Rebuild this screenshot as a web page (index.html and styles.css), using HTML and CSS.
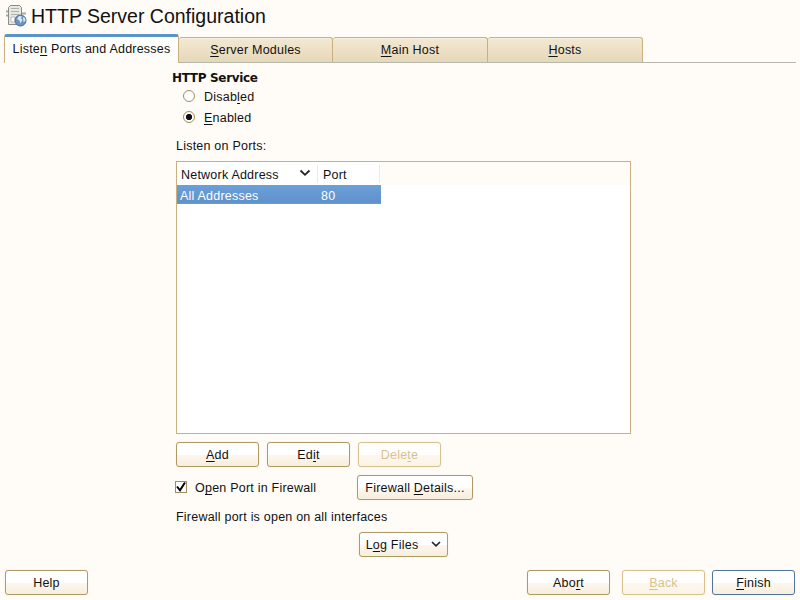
FILE: index.html
```html
<!DOCTYPE html>
<html lang="en">
<head>
<meta charset="utf-8">
<title>HTTP Server Configuration</title>
<link rel="stylesheet" href="styles.css">
</head>
<body>
<header class="title-bar">
  <svg class="server-icon" width="22" height="24" viewBox="0 0 22 24">
    <path d="M0 7.500h3M0 11.500h3M16 9.500h4" stroke="#aaa9a3" stroke-width="2"/>
    <path d="M2.500 3.500L4.500 1.500h9l2 2v17h-13z" fill="#e8e8e2" stroke="#8c8c86"/>
    <path d="M5 4.500h8M5 7.500h8M5 10.500h8" stroke="#b2b2aa"/>
    <path d="M5 13h4v5H5z" fill="#fff" stroke="#bbb"/>
    <circle cx="14.500" cy="16.500" r="5.500" fill="#6d94c0" stroke="#4c6a94"/>
    <path d="M11 15l2-3 3 .5-1 2 1.500 1-2 4-1-3zM17 13l2 1 .5 3-2 1z" fill="#dce9f4"/>
  </svg>
  <h1>HTTP Server Configuration</h1>
</header>
<nav class="tabs">
  <div class="tab active"><span>Liste<u>n</u> Ports and Addresses</span></div>
  <div class="tab first"><span><u>S</u>erver Modules</span></div>
  <div class="tab"><span><u>M</u>ain Host</span></div>
  <div class="tab"><span><u>H</u>osts</span></div>
</nav>
<main class="panel">
  <h2>HTTP Service</h2>
  <div class="radio-row"><span class="radio"></span><span>Disab<u>l</u>ed</span></div>
  <div class="radio-row"><span class="radio checked"></span><span><u>E</u>nabled</span></div>
  <p class="list-label">Listen on Ports:</p>
  <section class="table">
    <div class="head">
      <div class="cell address">Network Address<svg width="12" height="8" viewBox="0 0 12 8"><path d="M1.500 1.500L6 5.800l4.500-4.300" fill="none" stroke="#222" stroke-width="1.800"/></svg></div>
      <div class="cell port">Port</div>
    </div>
    <div class="row"><span class="value-address">All Addresses</span><span>80</span></div>
  </section>
  <div class="actions">
    <div class="button"><span><u>A</u>dd</span></div>
    <div class="button"><span>Ed<u>i</u>t</span></div>
    <div class="button disabled"><span>Dele<u>t</u>e</span></div>
  </div>
  <div class="firewall">
    <span class="check"><svg width="12" height="12" viewBox="0 0 12 12"><path d="M2 5.500l3 3.800L10 1.500" fill="none" stroke="#000" stroke-width="2"/></svg></span>
    <span class="check-label">O<u>p</u>en Port in Firewall</span>
    <div class="button details"><span>Firewall <u>D</u>etails...</span></div>
  </div>
  <p class="status">Firewall port is open on all interfaces</p>
  <div class="button log"><span>L<u>o</u>g Files</span><svg width="10" height="7" viewBox="0 0 10 7"><path d="M1 1l4 3.800L9 1" fill="none" stroke="#222" stroke-width="1.600"/></svg></div>
</main>
<footer class="footer">
  <div class="button">Help</div>
  <div class="button abort"><span>Abo<u>r</u>t</span></div>
  <div class="button disabled"><span><u>B</u>ack</span></div>
  <div class="button primary"><span><u>F</u>inish</span></div>
</footer>
</body>
</html>
```
FILE: styles.css
```css
* { box-sizing: border-box; }
body {
  margin: 0;
  width: 800px;
  height: 600px;
  overflow: hidden;
  display: flex;
  flex-direction: column;
  background: #fffcf7;
  color: #111;
  font: 12.500px/16px "Liberation Sans", Arial, sans-serif;
  letter-spacing: 0.220px;
}
h1, h2, p { margin: 0; }
u { text-decoration: underline; text-decoration-thickness: 1px; text-underline-offset: 2px; text-decoration-skip-ink: none; }
.title-bar { display: flex; height: 34px; padding: 4px 0 0 6px; }
.title-bar h1 { margin: 0 0 0 3px; font: 19.500px/24px "Liberation Sans", Arial, sans-serif; letter-spacing: 0; white-space: nowrap; }
.tabs { display: flex; height: 29px; margin: 0 4px; align-items: flex-end; border-bottom: 1px solid #b6b7ad; }
.tab {
  width: 155px; height: 25px; display: flex; justify-content: center; align-items: center;
  border: 1px solid #c9b07c; border-left: 0; border-bottom: 0; border-radius: 3px 3px 0 0;
  background: linear-gradient(#f2e9d3, #ecdfc4 55%, #e5d8b8);
  box-shadow: inset 0 1px #f8f1e1;
}
.tab.first { width: 154px; }
.tab.active {
  width: 175px; height: 29px; margin-bottom: -1px; padding-bottom: 2px; border: 1px solid #c9b07c; border-bottom: 0; border-top: 3px solid #5b93cd;
  background: linear-gradient(#fff, #fffcf7); box-shadow: inset 0 0 0 #fff, 0 -1px 0 -1px #3c6695; white-space: nowrap;
}
.panel { width: 455px; margin-left: 176px; }
h2 { margin: 7px 0 0 -4px; font: bold 12px/16px "DejaVu Sans", sans-serif; letter-spacing: -0.330px; }
.radio-row { display: flex; align-items: center; height: 21px; padding-left: 7px; gap: 9px; }
.radio { width: 12px; height: 12px; margin-top: -2px; border: 1px solid #a08c62; border-radius: 50%; background: #fff; }
.radio.checked { background: radial-gradient(circle, #111 0 2.800px, #fff 3.500px); }
.list-label { margin-top: 10px; }
.table { width: 455px; height: 273px; margin-top: 7px; border: 1px solid #c9b07c; background: #fff; }
.head { display: flex; height: 23px; align-items: center; background: linear-gradient(90deg, #fff 204px, #fffcf7 204px); }
.cell { height: 18px; padding-top: 2px; border-right: 1px solid #f5e8cf; }
.address { width: 141px; padding-left: 4px; display: flex; justify-content: space-between; padding-right: 6px; }
.address svg { margin-top: 2px; }
.port { width: 62px; padding-left: 5px; }
.row { display: flex; width: 204px; height: 19px; padding-left: 3px; line-height: 20px; color: #fff; background: linear-gradient(#6b9fd8, #5f91cb); border-top: 1px solid #a69672; border-bottom: 1px dotted #7d92a6; }
.value-address { width: 141px; }
.actions { display: flex; gap: 8px; margin-top: 8px; }
.button {
  width: 83px; height: 25px; display: flex; align-items: center; justify-content: center;
  border: 1px solid #b09964; border-radius: 3px; white-space: nowrap;
  background: linear-gradient(#fff 50%, #fff6ef 52%, #f5efdd);
  box-shadow: 0 0 1px #d9cba8;
}
.disabled { border-color: #d7c28e; color: #d7c28e; background: linear-gradient(#fffefc 50%, #fff6ef 52%, #faf4e6); }
.primary { border-color: #54749f; }
.firewall { display: flex; align-items: center; margin-top: 8px; }
.check { width: 12px; height: 12px; margin: -2px 0 0 -1px; border: 1px solid #a08c62; background: #fff; display: flex; }
.check svg { margin: -1px; flex: none; }
.check-label { width: 162px; margin-left: 8px; }
.details { width: 116px; }
.status { margin-top: 9px; }
.log { width: 89px; margin: 7px 0 0 183px; gap: 13px; }
.footer { display: flex; margin: 13px 5px 0; }
.footer .abort { margin-left: auto; margin-right: 12px; }
.footer .disabled { margin-right: 7px; }
```
